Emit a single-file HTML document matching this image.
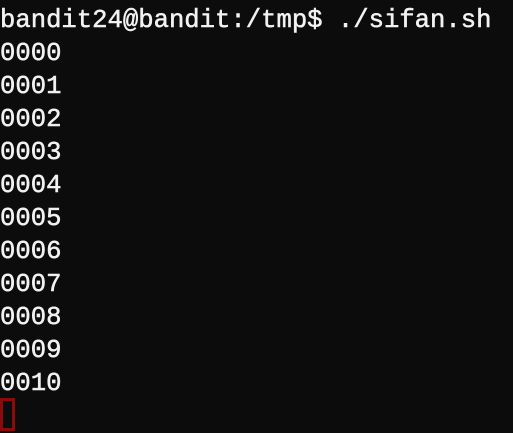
<!DOCTYPE html>
<html><head><style>
html,body{margin:0;padding:0;background:#0c0c0c;width:513px;height:433px;overflow:hidden}
pre{margin:0;padding:4px 0 0 0;font-family:"Liberation Mono",monospace;font-size:25.6px;line-height:33px;color:#f2f2f2;font-weight:normal;-webkit-text-stroke:0.5px #f2f2f2}
.cur{position:absolute;left:0;top:398px;width:9px;height:27px;border:3px solid #8b0a0a}
</style></head><body>
<pre>bandit24@bandit:/tmp$ ./sifan.sh
0000
0001
0002
0003
0004
0005
0006
0007
0008
0009
0010</pre>
<div class="cur"></div>
</body></html>
